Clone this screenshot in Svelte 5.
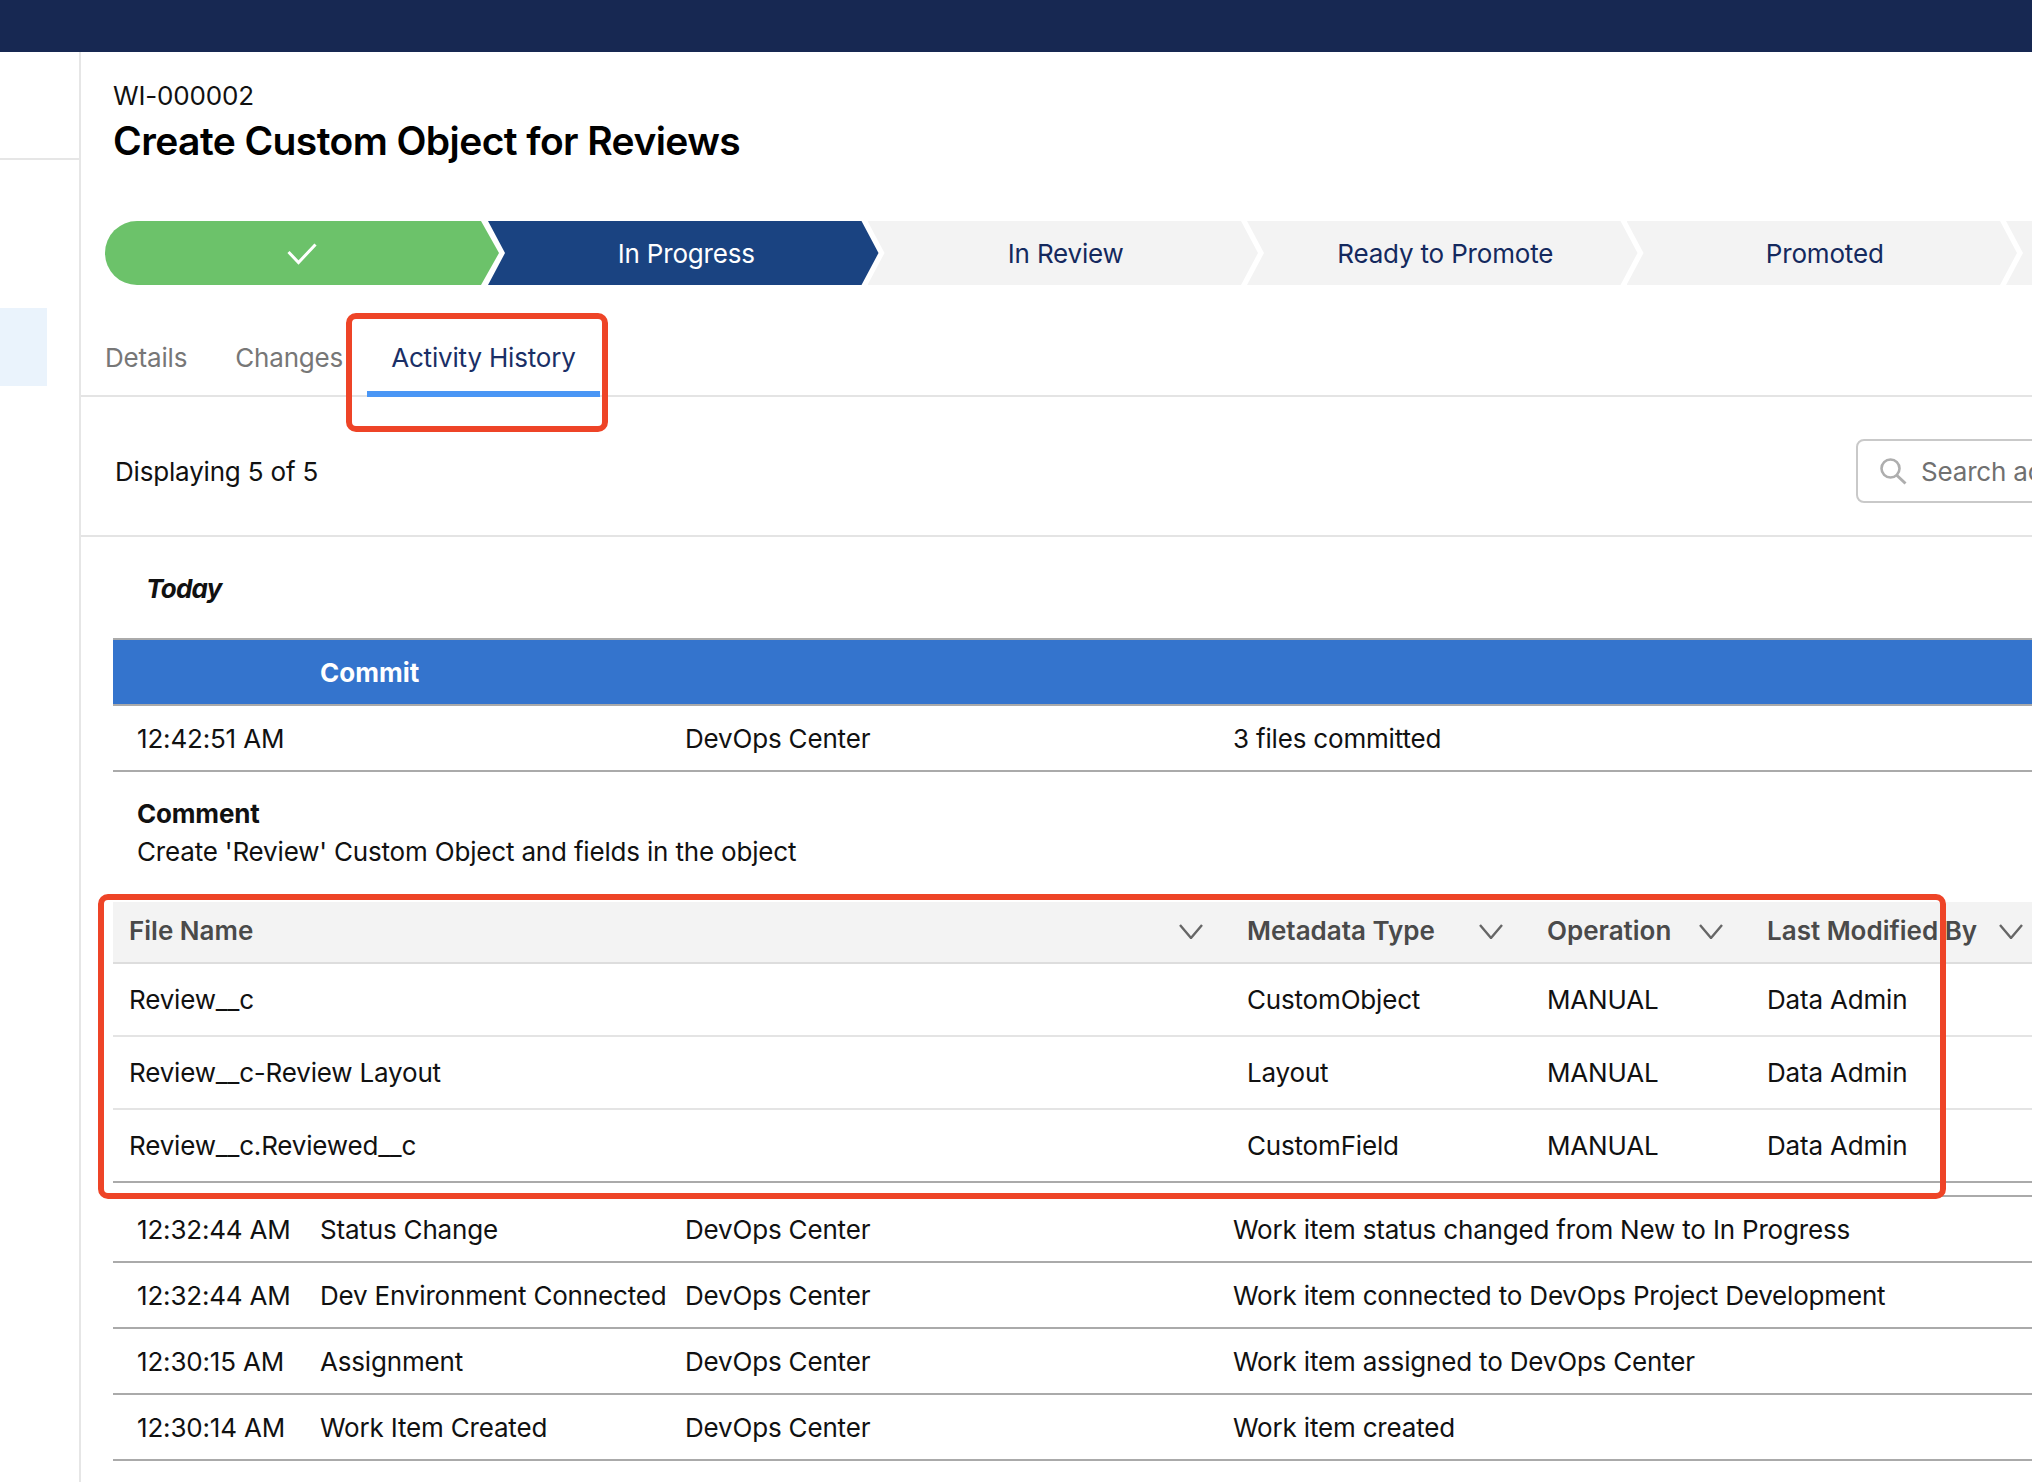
<script>
const steps = ["In Progress", "In Review", "Ready to Promote", "Promoted", ""];
const files = [
	["Review__c", "CustomObject"],
	["Review__c-Review Layout", "Layout"],
	["Review__c.Reviewed__c", "CustomField"]
];
const headers = ["File Name", "Metadata Type", "Operation", "Last Modified By"];
const history = [
	["12:32:44 AM", "Status Change", "Work item status changed from New to In Progress"],
	["12:32:44 AM", "Dev Environment Connected", "Work item connected to DevOps Project Development"],
	["12:30:15 AM", "Assignment", "Work item assigned to DevOps Center"],
	["12:30:14 AM", "Work Item Created", "Work item created"]
];
</script>

<div class="page">
	<header class="topbar"></header>
	<div class="layout">
		<aside class="sidebar">
			<div class="side-top"></div>
			<div class="side-active"></div>
		</aside>
		<main class="main">
			<div class="head">
				<div class="record">WI-000002</div>
				<h1>Create Custom Object for Reviews</h1>
			</div>

			<div class="path">
				<div class="step done">
					<svg width="30" height="22" viewBox="0 0 30 22"><path d="M1.5 9 L11.5 19.5 L28.5 1.5" fill="none" stroke="#fff" stroke-width="3" /></svg>
				</div>
				{#each steps as step, i}
					<div class="step" class:current={i == 0}>{step}</div>
				{/each}
			</div>

			<nav class="tabs">
				<div class="tab">Details</div>
				<div class="tab">Changes</div>
				<div class="tab active">Activity History</div>
			</nav>

			<div class="toolbar">
				<span>Displaying 5 of 5</span>
				<div class="search">
					<svg width="30" height="28" viewBox="0 0 30 28"><circle cx="12.5" cy="11.5" r="9" fill="none" stroke="#aeaeae" stroke-width="2.6" /><path d="M18.5 18 L27.5 26.5" stroke="#aeaeae" stroke-width="3" /></svg>
					<span>Search activity</span>
				</div>
			</div>

			<div class="content">
				<div class="today">Today</div>
				<div class="band">Commit</div>
				<div class="row">
					<span>12:42:51 AM</span><span></span><span>DevOps Center</span><span>3 files committed</span>
				</div>
				<div class="comment">
					<strong>Comment</strong>
					<div>Create 'Review' Custom Object and fields in the object</div>
				</div>
				<div class="files">
					<div class="file-row file-head">
						{#each headers as h}
							<div class="th">
								<span>{h}</span>
								<svg width="24" height="15" viewBox="0 0 24 15"><path d="M1 1 L12 14 L23 1" fill="none" stroke="#666" stroke-width="2.4" /></svg>
							</div>
						{/each}
					</div>
					{#each files as f}
						<div class="file-row">
							<div>{f[0]}</div><div>{f[1]}</div><div>MANUAL</div><div>Data Admin</div>
						</div>
					{/each}
				</div>
				<div class="spacer"></div>
				{#each history as h}
					<div class="row">
						<span>{h[0]}</span><span>{h[1]}</span><span>DevOps Center</span><span>{h[2]}</span>
					</div>
				{/each}
			</div>
		</main>
	</div>

	<div class="callout callout-tab"></div>
	<div class="callout callout-table"></div>
</div>

<style>
:global(body) {
	margin: 0;
	background: #fff;
}

.page {
	position: relative;
	width: 2032px;
	height: 1482px;
	overflow: hidden;
	font-family: Inter, "Liberation Sans", sans-serif;
	font-size: 26px;
	letter-spacing: -0.18px;
	color: #111;
}

.topbar {
	height: 52px;
	background: #172852;
}

.layout {
	display: flex;
	height: 1430px;
}

.sidebar {
	flex: none;
	width: 79px;
	border-right: 2px solid #e6e6e6;
}

.side-top {
	height: 106px;
	border-bottom: 2px solid #e6e6e6;
}

.side-active {
	width: 47px;
	height: 78px;
	margin-top: 148px;
	background: #eaf3fc;
}

.main {
	flex: none;
	width: 1951px;
}

.head {
	padding: 27px 0 0 32px;
}

.record {
	line-height: 34px;
}

h1 {
	margin: 6px 0 0;
	font-size: 39px;
	line-height: 44px;
	font-weight: 600;
	letter-spacing: -0.58px;
	color: #000;
}

.path {
	display: flex;
	margin: 58px 0 0 24px;
	height: 64px;
}

.step {
	flex: none;
	display: flex;
	align-items: center;
	justify-content: center;
	box-sizing: border-box;
	width: 390.5px;
	margin-left: -11px;
	padding-left: 6px;
	background: #f3f3f3;
	color: #14295e;
	clip-path: polygon(0 0, calc(100% - 17px) 0, 100% 50%, calc(100% - 17px) 100%, 0 100%, 17px 50%);
}

.step.done {
	width: 394px;
	margin-left: 0;
	padding: 2px 0 0;
	background: #6cc26a;
	border-radius: 32px 0 0 32px;
	clip-path: polygon(0 0, calc(100% - 18px) 0, 100% 50%, calc(100% - 18px) 100%, 0 100%);
}

.step.current {
	background: #1a4381;
	color: #fff;
}

.tabs {
	display: flex;
	align-items: flex-end;
	height: 110px;
	border-bottom: 2px solid #e4e4e4;
}

.tab {
	padding: 0 24px 17px;
	line-height: 32px;
	color: #777;
	border-bottom: 6px solid transparent;
	margin-bottom: -2px;
}

.tab.active {
	color: #1a2f66;
	border-bottom-color: #4a96f5;
}

.toolbar {
	display: flex;
	align-items: center;
	justify-content: space-between;
	height: 128px;
	padding: 10px 0 0 34px;
	border-bottom: 2px solid #e4e4e4;
}

.search {
	flex: none;
	display: flex;
	align-items: center;
	gap: 13px;
	box-sizing: border-box;
	width: 400px;
	height: 64px;
	margin-right: -224px;
	padding-left: 20px;
	border: 2px solid #c9c9c9;
	border-radius: 8px;
	color: #707070;
}

.content {
	margin-left: 32px;
}

.today {
	height: 101px;
	line-height: 103px;
	padding-left: 33px;
	font-style: italic;
	font-weight: 700;
	letter-spacing: -0.7px;
}

.band {
	box-sizing: border-box;
	height: 68px;
	line-height: 65px;
	padding-left: 207px;
	border-top: 2px solid #aaa;
	border-bottom: 2px solid #aaa;
	background: #3474cd;
	color: #fff;
	font-weight: 700;
	letter-spacing: 0;
}

.row {
	display: grid;
	grid-template-columns: 183px 365px 548px 1fr;
	box-sizing: border-box;
	height: 66px;
	line-height: 65px;
	padding-left: 24px;
	border-bottom: 2px solid #aaa;
	white-space: nowrap;
}

.comment {
	height: 130px;
	box-sizing: border-box;
	padding: 23px 0 0 24px;
	line-height: 38px;
}

.comment strong {
	font-weight: 700;
}

.file-row {
	display: grid;
	grid-template-columns: 1118px 300px 220px 300px;
	box-sizing: border-box;
	height: 73px;
	line-height: 72px;
	padding-left: 16px;
	border-bottom: 2px solid #e4e4e4;
}

.file-head {
	height: 62px;
	line-height: 58px;
	background: #f3f3f3;
	border-bottom-color: #ddd;
	color: #4a4a4a;
	font-weight: 600;
	letter-spacing: 0;
}

.file-row:last-child {
	border-bottom-color: #aaa;
}

.th {
	display: flex;
	align-items: center;
	justify-content: space-between;
	padding: 0 44px 2px 0;
}

.spacer {
	height: 12px;
	border-bottom: 2px solid #aaa;
}

.callout {
	position: absolute;
	box-sizing: border-box;
	border: 6px solid #ee4427;
	border-radius: 10px;
}

.callout-tab {
	left: 346px;
	top: 313px;
	width: 262px;
	height: 119px;
}

.callout-table {
	left: 98px;
	top: 894px;
	width: 1848px;
	height: 305px;
}
</style>
